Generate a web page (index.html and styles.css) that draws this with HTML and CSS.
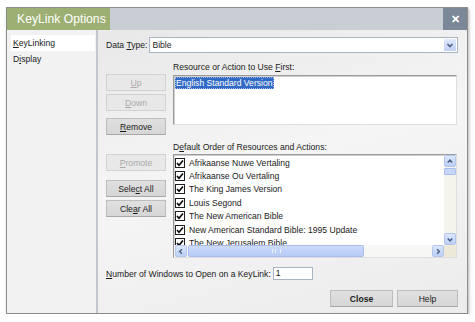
FILE: index.html
```html
<!DOCTYPE html>
<html lang="en">
<head>
  <meta charset="UTF-8">
  <title>KeyLink Options</title>
  <link rel="stylesheet" href="styles.css">
</head>
<body>
  <div class="window">
    <div class="titlebar">
      <div class="title-tab">KeyLink Options</div>
      <div class="title-fill"></div>
      <div class="close-btn">&#x2715;</div>
    </div>

    <div class="main">
      <nav class="nav">
        <div class="nav-item selected"><u>K</u>eyLinking</div>
        <div class="nav-item">D<u>i</u>splay</div>
      </nav>

      <div class="content">
        <div class="type-row">
          <label>Data <u>T</u>ype:</label>
          <div class="select">
            <span class="select-value">Bible</span>
            <span class="drop">
              <svg width="12" height="12" viewBox="0 0 12 12"><polyline points="3.5,5 6,7.5 8.5,5" fill="none" stroke="#4d6185" stroke-width="1.6"/></svg>
            </span>
          </div>
        </div>

        <section class="section first-section">
          <div class="btn-col">
            <button class="btn disabled"><u>U</u>p</button>
            <button class="btn disabled gap-small"><u>D</u>own</button>
            <button class="btn gap-mid"><u>R</u>emove</button>
          </div>
          <div class="box-col">
            <div class="box-label">Resource or Action to Use <u>F</u>irst:</div>
            <div class="box first-box">
              <span class="sel-item">English Standard Version</span>
            </div>
          </div>
        </section>

        <section class="section second-section">
          <div class="btn-col">
            <button class="btn disabled"><u>P</u>romote</button>
            <button class="btn gap-big">Sele<u>c</u>t All</button>
            <button class="btn gap-small">Cle<u>a</u>r All</button>
          </div>
          <div class="box-col">
            <div class="box-label">D<u>e</u>fault Order of Resources and Actions:</div>
            <div class="box list-box">
              <div class="rows">
                <div class="row"><span class="check"><svg width="8" height="8" viewBox="0 0 8 8"><polyline points="1,4 3,6.3 7,1.5" fill="none" stroke="#000" stroke-width="1.6"/></svg></span>Afrikaanse Nuwe Vertaling</div>
                <div class="row"><span class="check"><svg width="8" height="8" viewBox="0 0 8 8"><polyline points="1,4 3,6.3 7,1.5" fill="none" stroke="#000" stroke-width="1.6"/></svg></span>Afrikaanse Ou Vertaling</div>
                <div class="row"><span class="check"><svg width="8" height="8" viewBox="0 0 8 8"><polyline points="1,4 3,6.3 7,1.5" fill="none" stroke="#000" stroke-width="1.6"/></svg></span>The King James Version</div>
                <div class="row"><span class="check"><svg width="8" height="8" viewBox="0 0 8 8"><polyline points="1,4 3,6.3 7,1.5" fill="none" stroke="#000" stroke-width="1.6"/></svg></span>Louis Segond</div>
                <div class="row"><span class="check"><svg width="8" height="8" viewBox="0 0 8 8"><polyline points="1,4 3,6.3 7,1.5" fill="none" stroke="#000" stroke-width="1.6"/></svg></span>The New American Bible</div>
                <div class="row"><span class="check"><svg width="8" height="8" viewBox="0 0 8 8"><polyline points="1,4 3,6.3 7,1.5" fill="none" stroke="#000" stroke-width="1.6"/></svg></span>New American Standard Bible: 1995 Update</div>
                <div class="row"><span class="check"><svg width="8" height="8" viewBox="0 0 8 8"><polyline points="1,4 3,6.3 7,1.5" fill="none" stroke="#000" stroke-width="1.6"/></svg></span>The New Jerusalem Bible</div>
              </div>
              <div class="vscroll">
                <span class="arrow"><svg width="11" height="11" viewBox="0 0 11 11"><polyline points="3,6.5 5.5,4 8,6.5" fill="none" stroke="#4d6185" stroke-width="1.6"/></svg></span>
                <span class="vthumb"></span>
                <span class="vtrack"></span>
                <span class="arrow"><svg width="11" height="11" viewBox="0 0 11 11"><polyline points="3,4.5 5.5,7 8,4.5" fill="none" stroke="#4d6185" stroke-width="1.6"/></svg></span>
              </div>
              <div class="hscroll">
                <span class="arrow"><svg width="11" height="11" viewBox="0 0 11 11"><polyline points="6.5,3 4,5.5 6.5,8" fill="none" stroke="#4d6185" stroke-width="1.6"/></svg></span>
                <span class="hthumb"><span class="grip"></span></span>
                <span class="htrack"></span>
                <span class="arrow"><svg width="11" height="11" viewBox="0 0 11 11"><polyline points="4.5,3 7,5.5 4.5,8" fill="none" stroke="#4d6185" stroke-width="1.6"/></svg></span>
              </div>
              <div class="corner"></div>
            </div>
          </div>
        </section>

        <div class="num-row">
          <label><u>N</u>umber of Windows to Open on a KeyLink:</label>
          <div class="num-input">1</div>
        </div>

        <div class="footer">
          <button class="btn close-action">Close</button>
          <button class="btn help-action">Help</button>
        </div>
      </div>
    </div>
  </div>
</body>
</html>
```

FILE: styles.css
```css
body {
  margin: 0;
  background: #fff;
  font-family: "Liberation Sans", Arial, sans-serif;
  font-size: 8.6px;
  color: #1a1a1a;
}

u {
  text-decoration: underline;
  text-underline-offset: 1px;
}

.window {
  margin: 7px 0 0 6px;
  width: 462px;
  height: 307px;
  box-sizing: border-box;
  border: 1px solid #8c8c8c;
  box-shadow: 1px 2px 3px rgba(0,0,0,0.3);
  display: flex;
  flex-direction: column;
}

.titlebar {
  height: 22px;
  display: flex;
  background: #c9ced5;
}

.title-tab {
  width: 93px;
  padding-left: 10px;
  background: #9cb073;
  color: #fff;
  font-size: 12.2px;
  line-height: 22px;
}

.title-fill {
  flex: 1;
}

.close-btn {
  width: 24px;
  background: #7b8898;
  color: #fff;
  font-size: 11px;
  font-weight: bold;
  line-height: 22px;
  text-align: center;
}

.main {
  flex: 1;
  display: flex;
}

.nav {
  width: 89px;
  padding-top: 5px;
  background: #f2f2f2;
  border-right: 2px solid #c3c7cd;
}

.nav-item {
  margin: 0 1px 0 4px;
  padding-left: 2px;
  height: 16px;
  line-height: 16px;
}

.nav-item.selected {
  background: #fff;
}

.content {
  flex: 1;
  padding: 7px 9px 0 8px;
  background: linear-gradient(165deg, #e8e8e8 0%, #f5f5f5 45%, #ececec 100%);
  display: flex;
  flex-direction: column;
}

.type-row {
  display: flex;
  align-items: center;
  gap: 2px;
  height: 16px;
}

.select {
  flex: 1;
  height: 16px;
  box-sizing: border-box;
  border: 1px solid #a9b4c2;
  background: #fff;
  display: flex;
  align-items: center;
}

.select-value {
  flex: 1;
  padding-left: 2px;
}

.drop {
  width: 12px;
  height: 12px;
  margin-right: 1px;
  background: linear-gradient(#dfe8fb, #c0d1f5);
  border-radius: 1px;
  display: flex;
}

.section {
  display: flex;
  gap: 7px;
}

.first-section {
  margin-top: 8px;
}

.second-section {
  margin-top: 6px;
}

.btn-col {
  width: 60px;
  padding-top: 13px;
  display: flex;
  flex-direction: column;
}

.btn {
  height: 17px;
  padding: 0;
  font-family: inherit;
  font-size: inherit;
  color: #1a1a1a;
  background: linear-gradient(#e0e0e0, #d6d6d6);
  border: 1px solid #bdbdbd;
  border-bottom-color: #a8a8a8;
  border-radius: 0;
}

.btn.disabled {
  color: #a9a9a9;
  background: #e8e8e8;
  border-color: #d2d2d2;
}

.gap-small {
  margin-top: 3px;
}

.gap-mid {
  margin-top: 7px;
}

.gap-big {
  margin-top: 9px;
}

.box-col {
  flex: 1;
  margin-right: 1px;
}

.box-label {
  height: 12px;
  line-height: 12px;
  margin-bottom: 2px;
}

.second-section .box-label {
  margin-bottom: 1px;
}

.box {
  box-sizing: border-box;
  background: #fff;
  border: 1px solid;
  border-color: #9b9b9b #dedede #dedede #9b9b9b;
  box-shadow: inset 1px 1px 0 #cfcfcf;
}

.first-box {
  height: 50px;
  padding: 1px;
}

.sel-item {
  display: inline-block;
  height: 12px;
  line-height: 12px;
  padding: 0 1px;
  background: #316ac5;
  color: #fff;
  outline: 1px dotted #9bb8e8;
  outline-offset: -1px;
}

.list-box {
  height: 104px;
  display: grid;
  grid-template-columns: 1fr 12px;
  grid-template-rows: 90px 12px;
}

.rows {
  overflow: hidden;
  padding: 1px 0 0 1px;
}

.row {
  height: 13.4px;
  display: flex;
  align-items: center;
  gap: 4px;
  white-space: nowrap;
}

.check {
  width: 8px;
  height: 8px;
  border: 1px solid #1f1f1f;
  background: #fff;
  display: flex;
}

.vscroll {
  display: flex;
  flex-direction: column;
  background: #f4f3ec;
}

.hscroll {
  display: flex;
  align-items: stretch;
  background: #f7f7f5;
  padding-left: 1px;
}

.arrow {
  width: 12px;
  height: 12px;
  box-sizing: border-box;
  background: linear-gradient(#dce6fc, #bccff7);
  border: 1px solid #b4c6ee;
  border-radius: 2px;
  display: flex;
  align-items: center;
  justify-content: center;
}

.vthumb {
  height: 5px;
  margin: 1px 0;
  background: #c7d6f9;
  border: 1px solid #a9bdee;
  border-radius: 1px;
}

.vtrack {
  flex: 1;
}

.hthumb {
  width: 174px;
  margin-left: 1px;
  background: linear-gradient(#cddbfb, #b7cbf6);
  border: 1px solid #a7bced;
  border-radius: 2px;
  display: flex;
  justify-content: center;
  align-items: center;
}

.grip {
  width: 7px;
  height: 4px;
  border-left: 1px solid #eef3fe;
  border-right: 1px solid #eef3fe;
  background: linear-gradient(90deg, transparent 2px, #eef3fe 2px, #eef3fe 3px, transparent 3px);
}

.htrack {
  flex: 1;
}

.corner {
  background: #ece9d8;
}

.num-row {
  margin-top: 9px;
  height: 13px;
  display: flex;
  align-items: center;
  gap: 2px;
}

.num-input {
  width: 40px;
  height: 13px;
  box-sizing: border-box;
  border: 1px solid #a9b4c2;
  background: #fff;
  padding-left: 2px;
  line-height: 11px;
}

.footer {
  margin-top: 10px;
  display: flex;
  justify-content: flex-end;
  gap: 4px;
}

.close-action {
  width: 63px;
  font-weight: bold;
}

.help-action {
  width: 61px;
}
```
